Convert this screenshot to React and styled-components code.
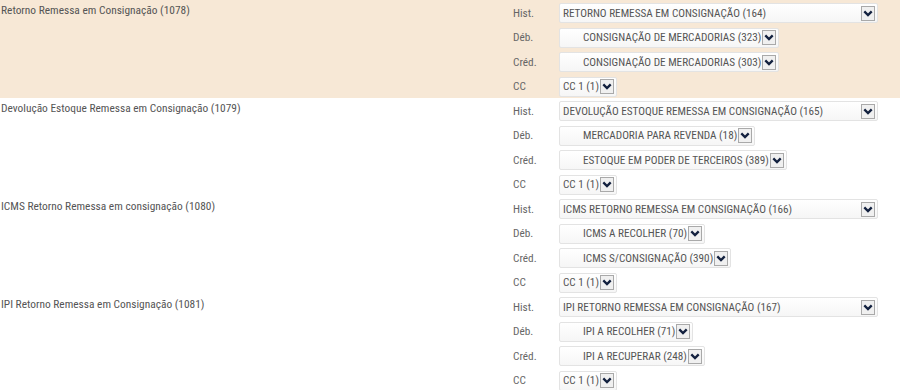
import styled, { createGlobalStyle } from "styled-components";

const GlobalStyle = createGlobalStyle`
  body {
    margin: 0;
    background: #ffffff;
    font-family: "Liberation Sans Narrow", "Roboto Condensed", "Liberation Sans", sans-serif;
    color: #555;
  }
`;

const groups = [
  {
    title: "Retorno Remessa em Consignação (1078)",
    hist: "RETORNO REMESSA EM CONSIGNAÇÃO (164)",
    deb: "CONSIGNAÇÃO DE MERCADORIAS (323)",
    cred: "CONSIGNAÇÃO DE MERCADORIAS (303)",
    highlight: true,
  },
  {
    title: "Devolução Estoque Remessa em Consignação (1079)",
    hist: "DEVOLUÇÃO ESTOQUE REMESSA EM CONSIGNAÇÃO (165)",
    deb: "MERCADORIA PARA REVENDA (18)",
    cred: "ESTOQUE EM PODER DE TERCEIROS (389)",
  },
  {
    title: "ICMS Retorno Remessa em consignação (1080)",
    hist: "ICMS RETORNO REMESSA EM CONSIGNAÇÃO (166)",
    deb: "ICMS A RECOLHER (70)",
    cred: "ICMS S/CONSIGNAÇÃO (390)",
  },
  {
    title: "IPI Retorno Remessa em Consignação (1081)",
    hist: "IPI RETORNO REMESSA EM CONSIGNAÇÃO (167)",
    deb: "IPI A RECOLHER (71)",
    cred: "IPI A RECUPERAR (248)",
  },
];

const Chevron = () => (
  <svg width="10" height="7" viewBox="0 0 10 7">
    <path d="M1.3 1.4 L5 5.1 L8.7 1.4" fill="none" stroke="#13213f" strokeWidth="2.3" />
  </svg>
);

const Dropdown = ({ value, indent, wide }) => (
  <Select $wide={wide}>
    <SelectText $indent={indent}>{value}</SelectText>
    <ArrowBox>
      <Chevron />
    </ArrowBox>
  </Select>
);

const App = () => (
  <>
    <GlobalStyle />
    <Page>
      {groups.map((g) => (
        <Group key={g.title} $highlight={g.highlight}>
          <Title>{g.title}</Title>
          <Fields>
            <Row>
              <Label>Hist.</Label>
              <Dropdown value={g.hist} wide />
            </Row>
            <Row>
              <Label>Déb.</Label>
              <Dropdown value={g.deb} indent />
            </Row>
            <Row>
              <Label>Créd.</Label>
              <Dropdown value={g.cred} indent />
            </Row>
            <Row>
              <Label>CC</Label>
              <Dropdown value="CC 1 (1)" />
            </Row>
          </Fields>
        </Group>
      ))}
    </Page>
  </>
);

export default App;

const Page = styled.div`
  width: 900px;
`;

const Group = styled.div`
  display: flex;
  justify-content: space-between;
  height: 98px;
  padding: 3px 22px 0 1px;
  box-sizing: border-box;
  background: ${(p) => (p.$highlight ? "#f7e8d6" : "transparent")};
`;

const Title = styled.div`
  font-size: 11.4px;
  line-height: 14px;
  color: #555;
`;

const Fields = styled.div`
  width: 365px;
  display: flex;
  flex-direction: column;
  gap: 4.5px;
`;

const Row = styled.div`
  display: flex;
  align-items: center;
  height: 20px;
`;

const Label = styled.div`
  flex: 0 0 46px;
  font-size: 11.3px;
  color: #666;
`;

const Select = styled.div`
  display: flex;
  align-items: center;
  justify-content: space-between;
  box-sizing: border-box;
  height: 20px;
  width: ${(p) => (p.$wide ? "319px" : "auto")};
  padding: 0 2px 0 3px;
  border: 1px solid #e3e3e3;
  border-radius: 2px;
  background: linear-gradient(#ffffff, #f6f6f6);
`;

const SelectText = styled.span`
  font-size: 11.2px;
  color: #555;
  white-space: nowrap;
  padding-left: ${(p) => (p.$indent ? "20px" : "0")};
`;

const ArrowBox = styled.span`
  display: flex;
  align-items: center;
  justify-content: center;
  width: 14px;
  height: 15px;
  margin-left: 1px;
  box-sizing: border-box;
  border: 1px solid #a9a9a9;
  background: #f0f0f0;
`;
